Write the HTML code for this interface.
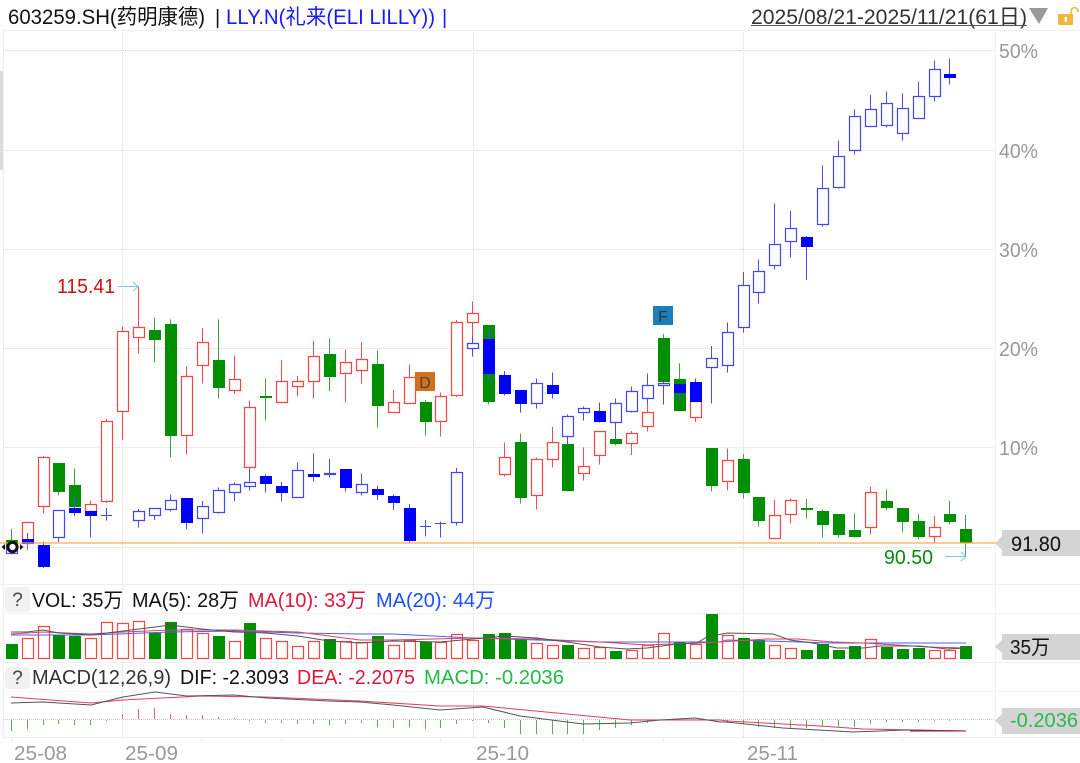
<!DOCTYPE html>
<html><head><meta charset="utf-8"><style>
html,body{margin:0;padding:0;background:#fff;width:1080px;height:763px;overflow:hidden}
svg{display:block}
text{font-family:"Liberation Sans","Noto Sans CJK SC",sans-serif;font-size:20px}
</style></head><body>
<svg width="1080" height="763" viewBox="0 0 1080 763" xmlns="http://www.w3.org/2000/svg">
<rect width="1080" height="763" fill="#fff"/>
<!-- frame -->
<path d="M3 30.5H1080M0 584.5H1080M3 662.5H1080M3 737.5H1080" stroke="#efefef" fill="none"/>
<path d="M3 613.5H1080M3 691.5H1080" stroke="#f6f6f6" fill="none"/>
<path d="M3.5 30V738M995.5 30V738" stroke="#f0f0f0" fill="none"/>
<rect x="0" y="71" width="3" height="99" fill="#dcdcdc"/>
<path d="M3 50.5H995M3 150.5H995M3 249.5H995M3 348.5H995M3 447.5H995M3 547.5H995" stroke="#dddddd" stroke-dasharray="1 1" fill="none"/>
<path d="M122.5 30V738M473.5 30V738M743.5 30V738" stroke="#dddddd" stroke-dasharray="1 1" fill="none"/>
<path d="M11.5 738V742M201.5 738V742M281.5 738V742M440.5 738V742M583.5 738V742M663.5 738V742M822.5 738V742M902.5 738V742" stroke="#eeeeee" fill="none"/>
<!-- header -->
<text x="8" y="24" style="font-size:21px" fill="#111" textLength="197" lengthAdjust="spacingAndGlyphs">603259.SH(药明康德)</text>
<text x="215" y="24" style="font-size:20px" fill="#111">|</text>
<text x="226" y="24" style="font-size:21px" fill="#1a1aff" textLength="209" lengthAdjust="spacingAndGlyphs">LLY.N(礼来(ELI LILLY))</text>
<text x="442" y="24" style="font-size:20px" fill="#1a1aff">|</text>
<text x="751" y="24" style="font-size:21px" fill="#333" textLength="276" lengthAdjust="spacingAndGlyphs">2025/08/21-2025/11/21(61日)</text>
<path d="M751 25.5H1027" stroke="#555" fill="none"/>
<path d="M1029 8H1048L1039 24Z" fill="#999"/>
<rect x="1058" y="14" width="15" height="11" rx="1" fill="#f2b63c"/>
<rect x="1064.5" y="17" width="2.4" height="5" fill="#fff"/>
<path d="M1071 14V12C1071 6 1078 6 1078 12" stroke="#f2b63c" stroke-width="1.6" fill="none"/>
<!-- axis -->
<g fill="#999">
<text x="999" y="58" textLength="39" lengthAdjust="spacingAndGlyphs">50%</text>
<text x="999" y="158" textLength="39" lengthAdjust="spacingAndGlyphs">40%</text>
<text x="999" y="257" textLength="39" lengthAdjust="spacingAndGlyphs">30%</text>
<text x="999" y="356" textLength="39" lengthAdjust="spacingAndGlyphs">20%</text>
<text x="999" y="455" textLength="39" lengthAdjust="spacingAndGlyphs">10%</text>
</g>
<!-- series A red hollow wicks -->
<g fill="none" stroke="#fb4a4a" stroke-width="1">
<path d="M27.5 522.5V550M43.5 456V513M90.5 501V537.5M106.5 419V503M122.5 326.5V440M138.5 286.5V353.5M186.5 366.5V454.5M202.5 328V383.5M234.5 355.5V394M249.5 400.5V469M281.5 360V402.5M297.5 376V396.5M313.5 341V398.5M345.5 349.5V402.5M361.5 342.5V383.5M393.5 390V412.5M409.5 364.5V403.5M440.5 392.5V436.5M456.5 320V397M472.5 301.5V343M504.5 442.5V476.5M536.5 457.5V509.5M552.5 427V467.5M583.5 447.5V480.5M599.5 431.5V464.5M631.5 431V455M647.5 403.5V431.5M695.5 401.5V422M727.5 448.5V490.5M774.5 500V538.5M790.5 498.5V523.5M870.5 487V534.5M934.5 516V543.5"/>
</g>
<g fill="#fff" stroke="#fb4444" stroke-width="1.2">
<path d="M22.5 522.5h11V543.5h-11zM38.5 457.5h11V506.5h-11zM85.5 504.5h11V511.5h-11zM101.5 421.5h11V501.5h-11zM117.5 331.5h11V411.5h-11zM133.5 327.5h11V337.5h-11zM181.5 376.5h11V435.5h-11zM197.5 342.5h11V365.5h-11zM229.5 379.5h11V390.5h-11zM244.5 407.5h11V467.5h-11zM276.5 381.5h11V402.5h-11zM292.5 381.5h11V386.5h-11zM308.5 356.5h11V381.5h-11zM340.5 362.5h11V373.5h-11zM356.5 359.5h11V370.5h-11zM388.5 402.5h11V412.5h-11zM404.5 377.5h11V403.5h-11zM435.5 396.5h11V421.5h-11zM451.5 322.5h11V395.5h-11zM467.5 313.5h11V322.5h-11zM499.5 457.5h11V474.5h-11zM531.5 459.5h11V495.5h-11zM547.5 442.5h11V459.5h-11zM578.5 466.5h11V473.5h-11zM594.5 431.5h11V455.5h-11zM626.5 433.5h11V443.5h-11zM642.5 412.5h11V426.5h-11zM690.5 401.5h11V417.5h-11zM722.5 460.5h11V481.5h-11zM769.5 515.5h11V538.5h-11zM785.5 500.5h11V514.5h-11zM865.5 492.5h11V527.5h-11zM929.5 527.5h11V536.5h-11z"/>
</g>
<!-- series A green -->
<g fill="#008f00" stroke="#008f00" stroke-width="1">
<path stroke="#3ea53e" fill="none" d="M11.5 529V546M58.5 463.5V495.5M74.5 468.5V506.5M154.5 317.5V362.5M170.5 319.5V457.5M218.5 319.5V398.5M265.5 378.5V420.5M329.5 338.5V391M377.5 351V427.5M425.5 400V435.5M488.5 325.5V404.5M520.5 433.5V503.5M567.5 444.5V491.5M615.5 439.5V445.5M663.5 334V381.5M679.5 363.5V410.5M711.5 448.5V491.5M743.5 454V498.5M758.5 497.5V526.5M806.5 499V518.5M822.5 509.5V537.5M838.5 514.5V537.5M854.5 513.5V537.5M886.5 489.5V510.5M902.5 508.5V532.5M918.5 514V539.5M949.5 501V524.5M965.5 515V556.5"/>
<path d="M6.5 540.5h11V545.5h-11zM53.5 463.5h11V491.5h-11zM69.5 485.5h11V506.5h-11zM149.5 330.5h11V339.5h-11zM165.5 324.5h11V435.5h-11zM213.5 360.5h11V387.5h-11zM260.5 396.5h11V397.5h-11zM324.5 354.5h11V376.5h-11zM372.5 364.5h11V405.5h-11zM420.5 402.5h11V421.5h-11zM483.5 325.5h11V401.5h-11zM515.5 442.5h11V497.5h-11zM562.5 444.5h11V490.5h-11zM610.5 439.5h11V443.5h-11zM658.5 338.5h11V381.5h-11zM674.5 379.5h11V410.5h-11zM706.5 448.5h11V485.5h-11zM738.5 459.5h11V492.5h-11zM753.5 497.5h11V520.5h-11zM801.5 508.5h11V509.5h-11zM817.5 511.5h11V524.5h-11zM833.5 514.5h11V534.5h-11zM849.5 530.5h11V536.5h-11zM881.5 501.5h11V507.5h-11zM897.5 508.5h11V521.5h-11zM913.5 521.5h11V536.5h-11zM944.5 514.5h11V521.5h-11zM960.5 529.5h11V542.5h-11z"/>
</g>
<!-- series B wicks -->
<path fill="none" stroke="#4a4aff" d="M58.5 510V542M106.5 508V520.5M138.5 509V527.5M154.5 508V520M170.5 494.5V511.5M202.5 501V533.5M218.5 487.5V513.5M234.5 482.5V501M249.5 469V490.5M297.5 462.5V498M329.5 459V477.5M361.5 473.5V495.5M425.5 520V536.5M440.5 521.5V537.5M456.5 468V525.5M472.5 336.5V356.5M536.5 378.5V408.5M567.5 414.5V444.5M583.5 406.5V420.5M615.5 398.5V439.5M631.5 386.5V412.5M647.5 373.5V403.5M663.5 381V404.5M711.5 346V403.5M727.5 322.5V372.5M743.5 272V332.5M758.5 259.5V303.5M774.5 203.5V269.5M790.5 211V257.5M822.5 165.5V226.5M838.5 140.5V188.5M854.5 109.5V154.5M870.5 95V127M886.5 91.5V127.5M902.5 93.5V140.5M918.5 81.5V119M934.5 60.5V101.5M27.5 533V543M43.5 541.5V568M74.5 495.5V516M90.5 511V537M186.5 498V529M265.5 474.5V492.5M281.5 482V501.5M313.5 453.5V481.5M345.5 469V491.5M377.5 486V500M393.5 494.5V510M409.5 504V543.5M488.5 330V380M504.5 371V395.5M520.5 390V412.5M552.5 372.5V398.5M599.5 402.5V422.5M679.5 384V400.5M695.5 378.5V402M806.5 236V280M949.5 58.5V84.5"/>
<!-- blue hollow -->
<g fill="#fff" stroke="#4444ff" stroke-width="1.2">
<path d="M6.5 545.5h11V553.5h-11zM53.5 510.5h11V537.5h-11zM133.5 511.5h11V520.5h-11zM149.5 508.5h11V515.5h-11zM165.5 500.5h11V509.5h-11zM197.5 506.5h11V518.5h-11zM213.5 490.5h11V512.5h-11zM229.5 484.5h11V492.5h-11zM244.5 482.5h11V486.5h-11zM292.5 470.5h11V497.5h-11zM324.5 473.5h11V474.5h-11zM356.5 484.5h11V492.5h-11zM451.5 472.5h11V522.5h-11zM467.5 343.5h11V348.5h-11zM531.5 383.5h11V403.5h-11zM562.5 416.5h11V436.5h-11zM578.5 408.5h11V412.5h-11zM610.5 403.5h11V422.5h-11zM626.5 391.5h11V411.5h-11zM642.5 385.5h11V398.5h-11zM658.5 383.5h11V385.5h-11zM706.5 358.5h11V367.5h-11zM722.5 332.5h11V365.5h-11zM738.5 285.5h11V327.5h-11zM753.5 271.5h11V292.5h-11zM769.5 244.5h11V265.5h-11zM785.5 228.5h11V241.5h-11zM817.5 188.5h11V224.5h-11zM833.5 156.5h11V187.5h-11zM849.5 116.5h11V150.5h-11zM865.5 109.5h11V126.5h-11zM881.5 103.5h11V125.5h-11zM897.5 108.5h11V133.5h-11zM913.5 96.5h11V118.5h-11zM929.5 69.5h11V96.5h-11z"/>
</g>
<path stroke="#4444ff" fill="none" d="M101 515.5H112M420 526.5H431M435 523.5H446"/>
<!-- blue filled -->
<path fill="#0000ff" stroke="#0000ff" d="M22.5 539.5h11V543.5h-11zM38.5 545.5h11V566.5h-11zM69.5 508.5h11V512.5h-11zM85.5 511.5h11V515.5h-11zM181.5 498.5h11V522.5h-11zM260.5 476.5h11V483.5h-11zM276.5 486.5h11V492.5h-11zM308.5 474.5h11V476.5h-11zM340.5 469.5h11V487.5h-11zM372.5 489.5h11V494.5h-11zM388.5 496.5h11V502.5h-11zM404.5 508.5h11V540.5h-11zM483.5 339.5h11V373.5h-11zM499.5 375.5h11V393.5h-11zM515.5 390.5h11V403.5h-11zM547.5 385.5h11V393.5h-11zM594.5 411.5h11V421.5h-11zM674.5 384.5h11V392.5h-11zM690.5 382.5h11V401.5h-11zM801.5 237.5h11V246.5h-11zM944.5 74.5h11V77.5h-11z"/>
<!-- orange current line -->
<path d="M0 543H996" stroke="#ffa94d" stroke-width="1.2" fill="none"/>
<!-- eye icon -->
<circle cx="12.5" cy="547" r="4.6" fill="#fff" stroke="#111" stroke-width="3"/>
<path d="M1.5 547L5 544V550ZM23.5 547L20 544V550Z" fill="#111"/>
<!-- markers -->
<rect x="415" y="372" width="20" height="19" fill="#d5701a"/>
<text x="425" y="388" text-anchor="middle" style="font-size:16px" fill="#444">D</text>
<rect x="653" y="306" width="20" height="19" fill="#1a80b8"/>
<text x="663" y="322" text-anchor="middle" style="font-size:16px" fill="#333">F</text>
<!-- extreme labels -->
<text x="57" y="293" fill="#cc1111" textLength="58" lengthAdjust="spacingAndGlyphs">115.41</text>
<path d="M118 286.5H138M133 282L138 286.5L133 291" stroke="#86c5da" fill="none"/>
<text x="884" y="564" fill="#0a8a0a" textLength="49" lengthAdjust="spacingAndGlyphs">90.50</text>
<path d="M945 556.5H966M961 552L966 556.5L961 561" stroke="#86c5da" fill="none"/>
<path d="M995 543L1002 536V530H1080V556H1002V550Z" fill="#d4d4d4"/>
<text x="1011" y="551" style="font-size:21px" fill="#111" textLength="50" lengthAdjust="spacingAndGlyphs">91.80</text>
<!-- VOL legend -->
<rect x="5" y="587" width="25" height="25" rx="3" fill="#f1f1f1"/>
<text x="17.5" y="606" text-anchor="middle" style="font-size:19px" fill="#444">?</text>
<text x="32" y="607" fill="#111" textLength="91" lengthAdjust="spacingAndGlyphs">VOL: 35万</text>
<text x="132" y="607" fill="#111" textLength="107" lengthAdjust="spacingAndGlyphs">MA(5): 28万</text>
<text x="248" y="607" fill="#e0143c" textLength="118" lengthAdjust="spacingAndGlyphs">MA(10): 33万</text>
<text x="376" y="607" fill="#1a4fff" textLength="119" lengthAdjust="spacingAndGlyphs">MA(20): 44万</text>
<!-- VOL bars -->
<path fill="#fff" stroke="#fb4444" stroke-width="1.2" d="M22.5 638.5h11V658.5h-11zM38.5 626.5h11V658.5h-11zM85.5 638.5h11V658.5h-11zM101.5 622.5h11V658.5h-11zM117.5 623.5h11V658.5h-11zM133.5 621.5h11V658.5h-11zM181.5 629.5h11V658.5h-11zM197.5 633.5h11V658.5h-11zM229.5 641.5h11V658.5h-11zM260.5 638.5h11V658.5h-11zM276.5 641.5h11V658.5h-11zM292.5 646.5h11V658.5h-11zM308.5 641.5h11V658.5h-11zM340.5 641.5h11V658.5h-11zM356.5 642.5h11V658.5h-11zM388.5 645.5h11V658.5h-11zM404.5 640.5h11V658.5h-11zM435.5 642.5h11V658.5h-11zM451.5 634.5h11V658.5h-11zM467.5 640.5h11V658.5h-11zM531.5 643.5h11V658.5h-11zM547.5 645.5h11V658.5h-11zM578.5 648.5h11V658.5h-11zM594.5 647.5h11V658.5h-11zM626.5 650.5h11V658.5h-11zM642.5 645.5h11V658.5h-11zM658.5 633.5h11V658.5h-11zM690.5 644.5h11V658.5h-11zM722.5 635.5h11V658.5h-11zM769.5 645.5h11V658.5h-11zM785.5 648.5h11V658.5h-11zM865.5 639.5h11V658.5h-11zM929.5 650.5h11V658.5h-11zM944.5 650.5h11V658.5h-11z"/>
<path fill="#008f00" stroke="#008f00" d="M6.5 644.5h11V658.5h-11zM53.5 635.5h11V658.5h-11zM69.5 636.5h11V658.5h-11zM149.5 633.5h11V658.5h-11zM165.5 622.5h11V658.5h-11zM213.5 636.5h11V658.5h-11zM244.5 623.5h11V658.5h-11zM324.5 639.5h11V658.5h-11zM372.5 636.5h11V658.5h-11zM420.5 642.5h11V658.5h-11zM483.5 634.5h11V658.5h-11zM499.5 633.5h11V658.5h-11zM515.5 639.5h11V658.5h-11zM562.5 645.5h11V658.5h-11zM610.5 651.5h11V658.5h-11zM674.5 642.5h11V658.5h-11zM706.5 614.5h11V658.5h-11zM738.5 638.5h11V658.5h-11zM753.5 640.5h11V658.5h-11zM801.5 650.5h11V658.5h-11zM817.5 644.5h11V658.5h-11zM833.5 650.5h11V658.5h-11zM849.5 646.5h11V658.5h-11zM881.5 647.5h11V658.5h-11zM897.5 649.5h11V658.5h-11zM913.5 648.5h11V658.5h-11zM960.5 646.5h11V658.5h-11z"/>
<!-- VOL MAs -->
<polyline fill="none" stroke="#4a62f0" points="11,635 91,635 170,632 234,631 298,633 360,634 393,634 473,638 537,640 600,642 655,642 720,642 727,640 767,641 830,643 966,643"/>
<polyline fill="none" stroke="#e0405f" points="11,634 43,632 91,634 123,632 170,630 234,630 298,632 360,640 393,640 473,638 537,639 600,642 647,645 697,643 720,642 767,639 798,639 833,642 863,643 897,645 927,647 966,648"/>
<polyline fill="none" stroke="#555" points="11,632 27,632 43,630 59,633 91,635 123,631 155,627 170,625 202,629 234,632 266,633 298,636 329,641 360,643 393,641 440,642 473,639 505,636 537,638 567,642 600,647 627,649 647,648 677,644 697,643 707,637 727,633 773,634 790,640 813,643 837,648 863,648 880,646 920,646 947,649 966,648"/>
<!-- MACD legend -->
<rect x="5" y="667" width="25" height="22" rx="3" fill="#f1f1f1"/>
<text x="17.5" y="684" text-anchor="middle" style="font-size:19px" fill="#444">?</text>
<text x="32" y="684" fill="#333" textLength="139" lengthAdjust="spacingAndGlyphs">MACD(12,26,9)</text>
<text x="180" y="684" fill="#111" textLength="109" lengthAdjust="spacingAndGlyphs">DIF: -2.3093</text>
<text x="297" y="684" fill="#e0143c" textLength="118" lengthAdjust="spacingAndGlyphs">DEA: -2.2075</text>
<text x="424" y="684" fill="#22bb44" textLength="140" lengthAdjust="spacingAndGlyphs">MACD: -0.2036</text>
<!-- MACD zero and hist -->
<path d="M3 719.5H995" stroke="#ccc" stroke-dasharray="1 1" fill="none"/>
<path fill="none" stroke="#f06060" d="M122.5 719V714M138.5 719V709M154.5 719V708M170.5 719V714M186.5 719V715M202.5 719V715M218.5 719V717M234.5 719V718"/>
<path fill="none" stroke="#55b555" d="M11.5 720V731M27.5 720V729M43.5 720V725M58.5 720V724M74.5 720V725M90.5 720V725M106.5 720V721M249.5 720V721M265.5 720V723M281.5 720V723M297.5 720V724M313.5 720V724M329.5 720V725M345.5 720V724M361.5 720V723M377.5 720V727M393.5 720V728M409.5 720V727M425.5 720V729M440.5 720V728M456.5 720V724M472.5 720V721M488.5 720V723M504.5 720V728M520.5 720V734M536.5 720V734M552.5 720V734M567.5 720V734M583.5 720V734M599.5 720V730M615.5 720V728M631.5 720V725M647.5 720V723M727.5 720V723M743.5 720V724M758.5 720V727M774.5 720V728M790.5 720V728M806.5 720V728M822.5 720V727M838.5 720V727M854.5 720V727M870.5 720V724M886.5 720V722M902.5 720V722M918.5 720V722M934.5 720V721M949.5 720V720.8"/>
<polyline fill="none" stroke="#e0405f" points="11,697 91,703 123,700 202,696 266,697 360,701 440,706 483,706 567,714 630,720 720,720 727,721 820,726 863,729 966,731"/>
<polyline fill="none" stroke="#555" points="11,703 43,702 91,705 123,697 155,692 187,696 234,695 266,698 329,701 360,702 393,705 440,710 483,707 520,716 567,722 583,724 630,723 660,720 695,718 720,722 727,722 783,728 853,732 907,730 966,731"/>
<polyline fill="none" stroke="#a0102a" points="910,731 966,731"/>
<!-- right value tags -->
<path d="M995 646.5L1002 640V634H1080V660H1002V653Z" fill="#d4d4d4"/>
<text x="1010" y="654" fill="#111" textLength="40" lengthAdjust="spacingAndGlyphs">35万</text>
<path d="M995 720.5L1002 714V708H1080V734H1002V727Z" fill="#d4d4d4"/>
<text x="1010" y="727" fill="#2eb84c" textLength="68" lengthAdjust="spacingAndGlyphs">-0.2036</text>
<!-- x labels -->
<text x="14" y="760" fill="#999" textLength="53" lengthAdjust="spacingAndGlyphs">25-08</text>
<text x="125" y="760" fill="#999" textLength="53" lengthAdjust="spacingAndGlyphs">25-09</text>
<text x="476" y="760" fill="#999" textLength="53" lengthAdjust="spacingAndGlyphs">25-10</text>
<text x="747" y="760" fill="#999" textLength="51" lengthAdjust="spacingAndGlyphs">25-11</text>
</svg>
</body></html>
